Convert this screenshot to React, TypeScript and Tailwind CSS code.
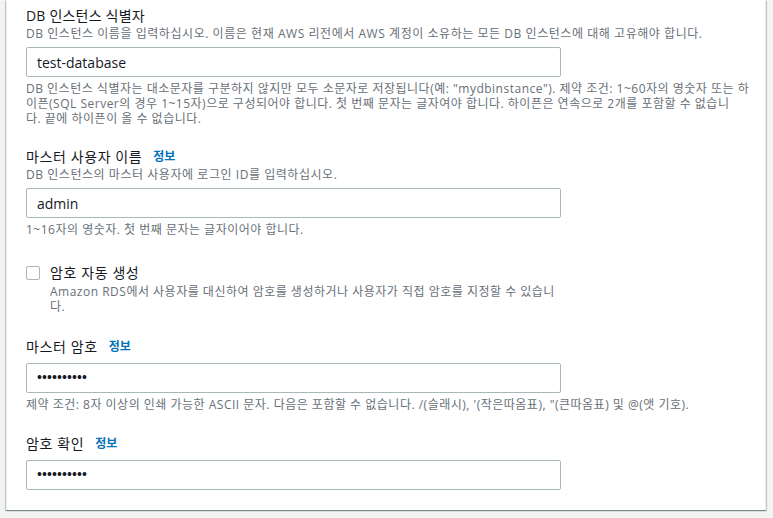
import React from "react";

const font = { fontFamily: '"Open Sans", "Noto Sans CJK KR", sans-serif' };

function Info() {
  return <span className="ml-[11px] text-[12px] font-bold tracking-normal text-[#0073bb]">정보</span>;
}

function Field({ value, password }: { value: string; password?: boolean }) {
  return (
    <div className="flex h-[30px] w-[535px] items-center rounded-[2px] border border-[#aab7b8] bg-white px-[10px] text-[14px] text-[#16191f]">
      {password ? <span className="text-[13px] font-bold tracking-[0.1px]">{value}</span> : value}
    </div>
  );
}

function Help({ lines }: { lines: string[] }) {
  return (
    <div className="mt-1 text-[12px] leading-[15px] tracking-[0.5px] text-[#687078]">
      {lines.map((l) => (
        <div key={l} className="whitespace-nowrap">
          {l}
        </div>
      ))}
    </div>
  );
}

export default function App() {
  return (
    <div className="h-[518px] w-[773px] overflow-hidden bg-[#f2f3f3]" style={font}>
      <div className="ml-[6px] w-[760px] border-l border-r border-[#eaeded] bg-white pb-[20px] pl-[19px] pt-[6px] shadow-[0_1px_1px_0_rgba(0,28,36,0.3),1px_1px_1px_0_rgba(0,28,36,0.15),-1px_1px_1px_0_rgba(0,28,36,0.15)]">
        <div className="text-[14px] leading-5 tracking-[0.2px] text-[#16191f]">DB 인스턴스 식별자</div>
        <div className="text-[12px] leading-4 tracking-[0.55px] text-[#687078]">
          DB 인스턴스 이름을 입력하십시오. 이름은 현재 AWS 리전에서 AWS 계정이 소유하는 모든 DB 인스턴스에 대해 고유해야 합니다.
        </div>
        <div className="mt-[5px]">
          <Field value="test-database" />
        </div>
        <Help
          lines={[
            'DB 인스턴스 식별자는 대소문자를 구분하지 않지만 모두 소문자로 저장됩니다(예: "mydbinstance"). 제약 조건: 1~60자의 영숫자 또는 하',
            "이픈(SQL Server의 경우 1~15자)으로 구성되어야 합니다. 첫 번째 문자는 글자여야 합니다. 하이픈은 연속으로 2개를 포함할 수 없습니",
            "다. 끝에 하이픈이 올 수 없습니다.",
          ]}
        />

        <div className="mt-[21px] flex items-center text-[14px] leading-5 tracking-[0.6px] text-[#16191f]">
          마스터 사용자 이름
          <Info />
        </div>
        <div className="text-[12px] leading-4 tracking-[0.55px] text-[#687078]">
          DB 인스턴스의 마스터 사용자에 로그인 ID를 입력하십시오.
        </div>
        <div className="mt-[5px]">
          <Field value="admin" />
        </div>
        <Help lines={["1~16자의 영숫자. 첫 번째 문자는 글자이어야 합니다."]} />

        <div className="mt-[26px] flex gap-[10px]">
          <div className="mt-[3px] h-[14px] w-[14px] shrink-0 rounded-[2px] border border-[#aab7b8] bg-white" />
          <div>
            <div className="text-[14px] leading-5 tracking-[0.6px] text-[#16191f]">암호 자동 생성</div>
            <div className="mt-px text-[12px] leading-[15px] tracking-[0.5px] text-[#687078]">
              <div className="whitespace-nowrap">
                Amazon RDS에서 사용자를 대신하여 암호를 생성하거나 사용자가 직접 암호를 지정할 수 있습니
              </div>
              <div>다.</div>
            </div>
          </div>
        </div>

        <div className="mt-[23px] flex items-center text-[14px] leading-5 tracking-[0.6px] text-[#16191f]">
          마스터 암호
          <Info />
        </div>
        <div className="mt-[6px]">
          <Field value="••••••••••" password />
        </div>
        <Help
          lines={[
            "제약 조건: 8자 이상의 인쇄 가능한 ASCII 문자. 다음은 포함할 수 없습니다. /(슬래시), '(작은따옴표), \"(큰따옴표) 및 @(앳 기호).",
          ]}
        />

        <div className="mt-[22px] flex items-center text-[14px] leading-5 tracking-[0.6px] text-[#16191f]">
          암호 확인
          <Info />
        </div>
        <div className="mt-[6px]">
          <Field value="••••••••••" password />
        </div>
      </div>
    </div>
  );
}
